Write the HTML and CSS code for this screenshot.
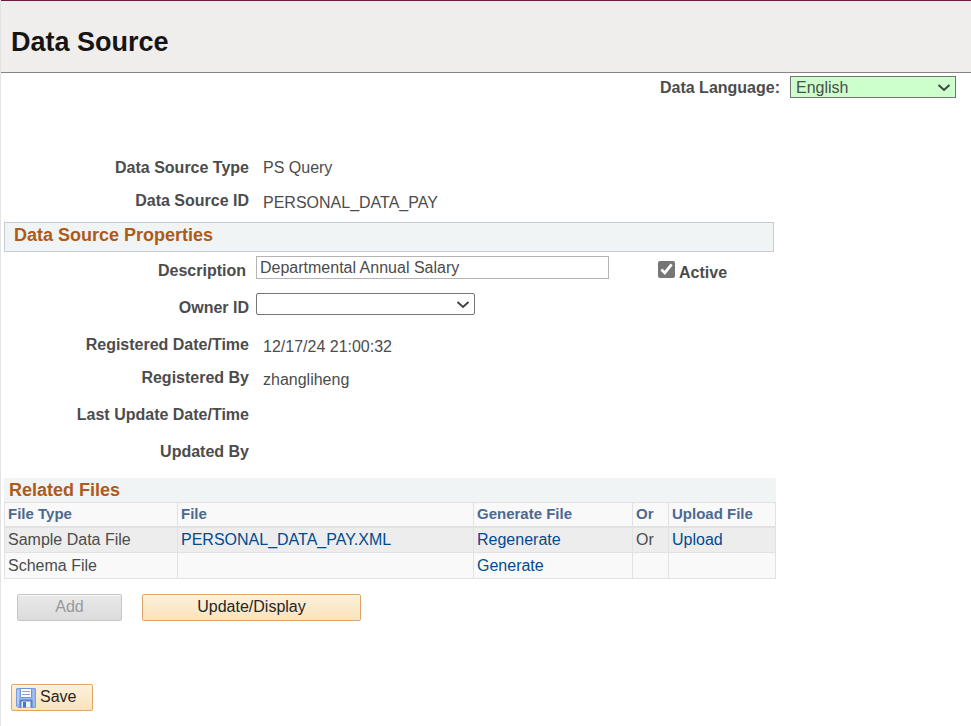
FILE: index.html
```html
<!DOCTYPE html>
<html lang="en">
<head>
<meta charset="utf-8">
<title>Data Source</title>
<meta name="viewport" content="width=device-width, initial-scale=1">
<link rel="stylesheet" href="styles.css">
</head>
<body>
<header class="page-header"><h1>Data Source</h1></header>
<main>
<form>
  <div class="language">
    <label for="language">Data Language:</label>
    <select id="language" class="select select-language"><option>English</option></select>
  </div>

  <dl class="facts facts-key">
    <div class="row"><dt>Data Source Type</dt><dd>PS Query</dd></div>
    <div class="row"><dt>Data Source ID</dt><dd class="low">PERSONAL_DATA_PAY</dd></div>
  </dl>

  <h2 class="section-title">Data Source Properties</h2>
  <div class="field field-description">
    <label for="description">Description</label>
    <input id="description" class="text-input" type="text" value="Departmental Annual Salary">
    <div class="active">
      <input id="active" type="checkbox" checked>
      <label for="active">Active</label>
    </div>
  </div>
  <div class="field field-owner">
    <label for="owner">Owner ID</label>
    <select id="owner" class="select select-owner"><option></option></select>
  </div>
  <dl class="facts">
    <div class="row"><dt>Registered Date/Time</dt><dd class="low">12/17/24 21:00:32</dd></div>
    <div class="row row-tall"><dt>Registered By</dt><dd class="low">zhangliheng</dd></div>
    <div class="row row-tall"><dt>Last Update Date/Time</dt><dd></dd></div>
    <div class="row row-tall"><dt>Updated By</dt><dd></dd></div>
  </dl>

  <table class="files">
    <caption>Related Files</caption>
    <colgroup><col class="col-type"><col class="col-file"><col class="col-generate"><col class="col-or"><col class="col-upload"></colgroup>
    <thead>
      <tr><th scope="col">File Type</th><th scope="col">File</th><th scope="col">Generate File</th><th scope="col">Or</th><th scope="col">Upload File</th></tr>
    </thead>
    <tbody>
      <tr><td>Sample Data File</td><td><a href="#">PERSONAL_DATA_PAY.XML</a></td><td><a href="#">Regenerate</a></td><td>Or</td><td><a href="#">Upload</a></td></tr>
      <tr><td>Schema File</td><td></td><td><a href="#">Generate</a></td><td></td><td></td></tr>
    </tbody>
  </table>

  <div class="modes">
    <button type="button" class="button button-add" disabled>Add</button>
    <button type="button" class="button button-update">Update/Display</button>
  </div>
  <div class="save">
    <button type="button" class="button button-save">
      <svg width="20" height="20" viewBox="0 0 20 20" aria-hidden="true">
        <path d="M1 .5h18a.5.5 0 0 1 .5.5v18a.5.5 0 0 1-.5.5H2L.5 18V1A.5.5 0 0 1 1 .5z" fill="#9bbaf0" stroke="#7b9ddf"/>
        <path d="M2 2v14" stroke="#c8daf9"/>
        <path d="M4.500 .5h11v9h-11z" fill="#fff" stroke="#6f93d8"/>
        <path d="M6 3.500h8M6 6.500h8" stroke="#8d9fbc"/>
        <path d="M5 12h10v7.500H5z" fill="#edf2fc"/>
        <path d="M4.500 19.500v-7h11v7" fill="none" stroke="#5c80c6" stroke-width="2"/>
        <path d="M7 14h3v5.500H7z" fill="#4973c4"/>
      </svg>
      <span>Save</span>
    </button>
  </div>
</form>
</main>
</body>
</html>
```

FILE: styles.css
```css
* { box-sizing: border-box; }

body {
  margin: 0;
  min-height: 100vh;
  border-left: 1px solid #e3e3e3;
  background: #fff;
  color: #4c4c4c;
  font: 16px/22px "Liberation Sans", Arial, sans-serif;
}

input, select, button { font: inherit; color: inherit; margin: 0; }

.page-header {
  padding: 25px 10px 13px;
  border-top: 1px solid #6b1f3f;
  border-bottom: 1px solid #878380;
  background: #f0eeed;
}

h1 { margin: 0; color: #161513; font-size: 27px; line-height: 33px; }

.language {
  display: flex;
  justify-content: flex-end;
  align-items: baseline;
  gap: 10px;
  padding: 3px 15px 0 0;
}

label, dt { font-weight: bold; }

.select {
  appearance: none;
  height: 22px;
  padding: 1px 24px 0 5px;
  border: 1px solid #767676;
  background: #fff url("data:image/svg+xml,%3Csvg xmlns='http://www.w3.org/2000/svg' width='14' height='10' viewBox='0 0 14 10'%3E%3Cpath d='M1.500 2l5.500 5 5.500-5' fill='none' stroke='%23444' stroke-width='2'/%3E%3C/svg%3E") no-repeat right 4px top 6px;
}

.select-language { width: 166px; background-color: #cfc; line-height: 20px; }
.select-owner { width: 219px; border-radius: 2px; }

.facts { margin: 0; }
.facts-key { padding-top: 58px; }
.row {
  display: grid;
  grid-template-columns: 248px 1fr;
  column-gap: 14px;
  min-height: 33px;
}
.row-tall { min-height: 37px; }
dt { text-align: right; }
dd { margin: 0; }
.low { padding-top: 2px; }

.section-title {
  width: 770px;
  max-width: calc(100% - 6px);
  margin: -1px 3px 4px;
  padding: 0 9px 4px;
  border: 1px solid #c6cbd2;
  background: #f0f4f5;
  color: #ae5a18;
  font-size: 18px;
  line-height: 24px;
}

.field { display: grid; }
.field > label { padding-top: 4px; text-align: right; }
.field-description {
  grid-template-columns: 245px 353px auto;
  justify-content: start;
  column-gap: 10px;
  min-height: 37px;
}
.field-owner {
  grid-template-columns: 248px 219px;
  column-gap: 7px;
  min-height: 41px;
}

.text-input {
  width: 100%;
  height: 23px;
  padding: 0 3px;
  border: 1px solid #b4b4b4;
  border-radius: 0;
  background: #fff;
  line-height: 20px;
}

.active { display: flex; gap: 4px; padding: 5px 0 0 39px; }
.active input { width: 17px; height: 17px; accent-color: #767676; }
.active label { padding-top: 1px; }

.files {
  width: 772px;
  max-width: calc(100% - 6px);
  margin: 0 3px;
  border-collapse: collapse;
  table-layout: fixed;
  background: #f9f9f9;
}
caption {
  padding: 0 5px;
  background: #f0f4f5;
  color: #ae5a18;
  font-size: 18px;
  font-weight: bold;
  line-height: 24px;
  text-align: left;
}
th, td { height: 26px; padding: 0 3px; border: 1px solid #e2e2e2; text-align: left; }
th { height: 24px; border-bottom-width: 2px; color: #4c6a91; font-size: 15px; }
tbody tr:nth-child(odd) { background: #ededed; }
.col-type { width: 173px; }
.col-file { width: 296px; }
.col-generate { width: 159px; }
.col-or { width: 36px; }
a { color: #004b91; text-decoration: none; }

.modes { display: flex; gap: 20px; padding: 15px 16px 0; }
.button {
  height: 27px;
  padding: 0 4px 2px;
  border: 1px solid #dda567;
  border-radius: 2px;
  background: linear-gradient(#fdf0da, #fbe3bc);
  box-shadow: inset 0 1px #fff8ea;
  color: #262626;
  line-height: 20px;
}
.button:disabled {
  border-color: #c6c6c6;
  background: linear-gradient(#e9e9e9, #dcdcdc);
  box-shadow: inset 0 1px #f8f8f8;
  color: #999;
}
.button-add { width: 105px; }
.button-update { width: 219px; }
.save { padding: 63px 10px 15px; }
.button-save { display: flex; align-items: center; gap: 4px; width: 82px; padding: 0 4px; }
.button-save span { padding-bottom: 2px; }
```
